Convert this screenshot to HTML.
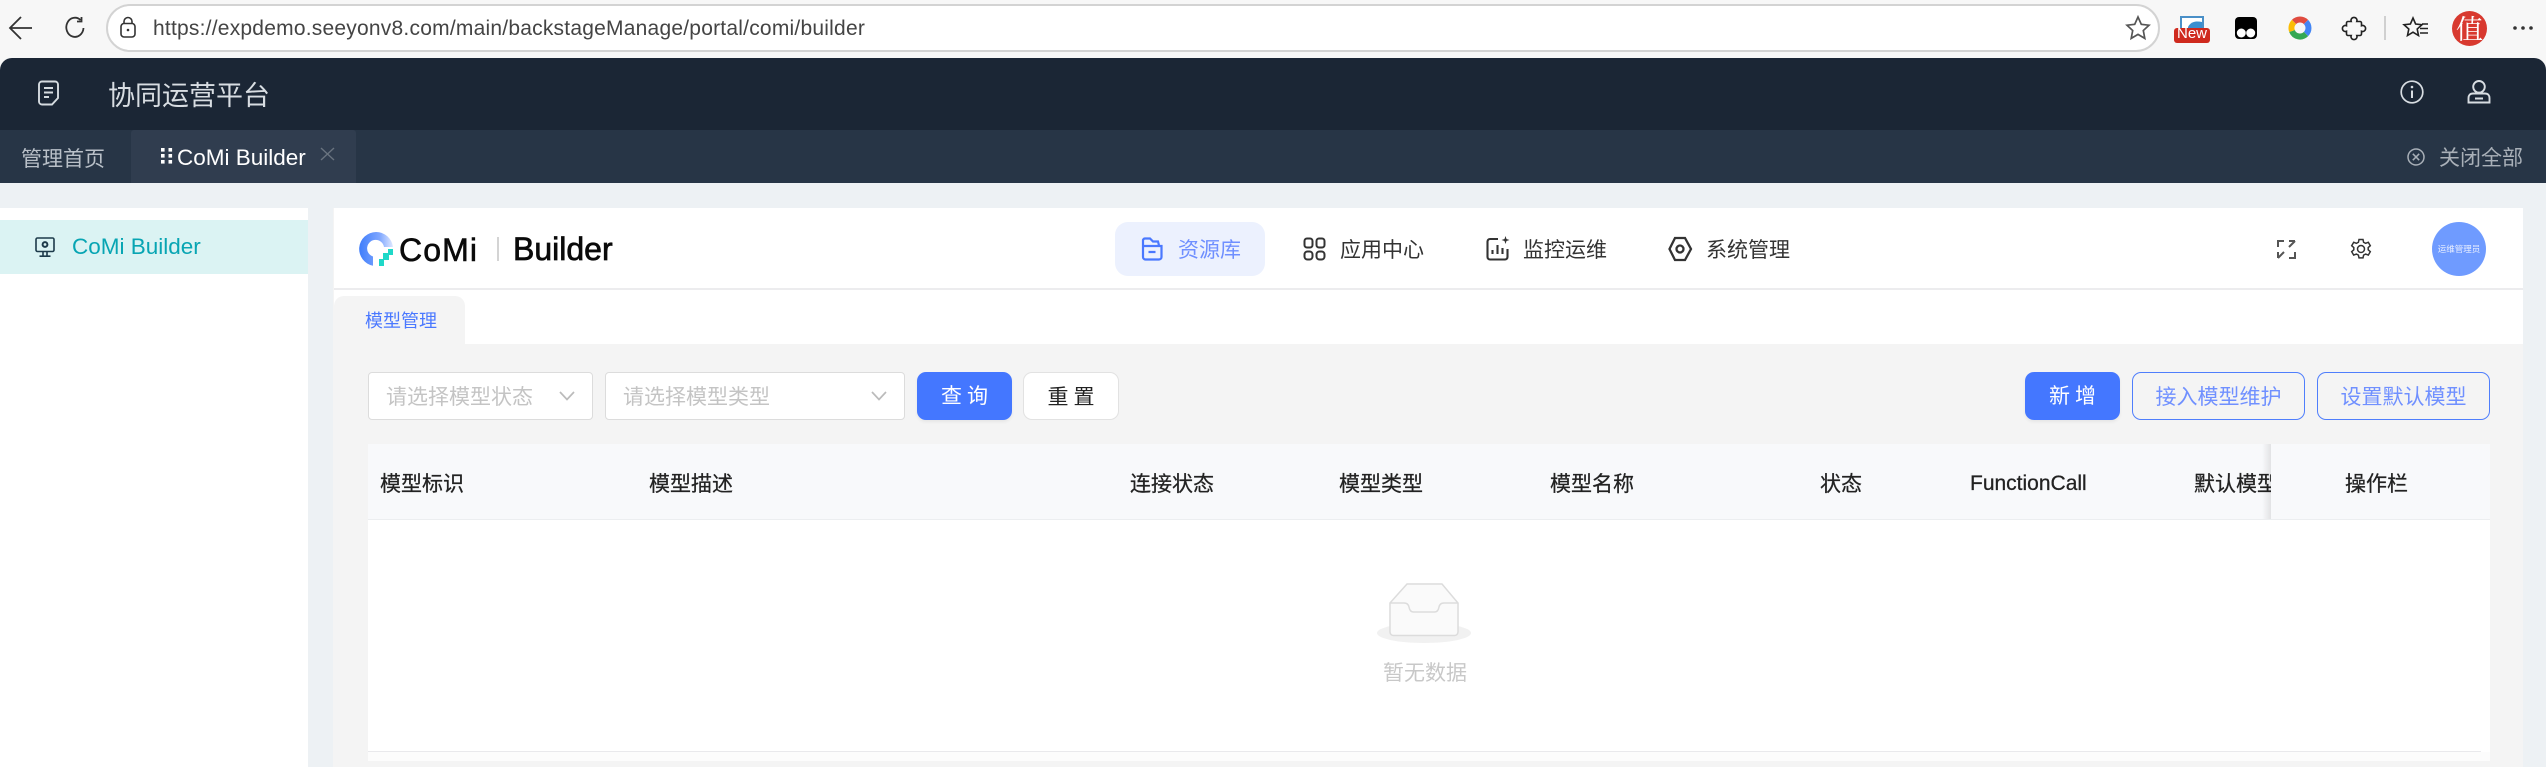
<!DOCTYPE html>
<html lang="zh"><head><meta charset="utf-8"><title>CoMi Builder</title>
<style>
*{box-sizing:border-box}
html,body{margin:0;padding:0}
body{width:2546px;height:767px;position:relative;overflow:hidden;background:#f7f7f7;font-family:"Liberation Sans","Noto Sans CJK SC",sans-serif}
.a{position:absolute}
.t{position:absolute;white-space:nowrap;font-family:"Noto Sans CJK SC","Liberation Sans",sans-serif;font-size:21px}
.l{font-family:"Liberation Sans","Noto Sans CJK SC",sans-serif}
svg{position:absolute;display:block;overflow:visible}
.th{color:#222;line-height:30px;top:468px;-webkit-text-stroke:.25px #222}
.btn{position:absolute;top:372px;height:48px;border-radius:8px;text-align:center;line-height:46px;font-family:"Noto Sans CJK SC",sans-serif;font-size:21px;white-space:nowrap}
.sel{position:absolute;top:372px;height:48px;background:#fff;border:1.5px solid #dcdcdc;border-radius:4px}
</style></head><body>

<!-- browser chrome -->
<svg style="left:8px;top:15px" width="26" height="26" viewBox="0 0 26 26" fill="none" stroke="#333" stroke-width="1.8"><path d="M13 2 2 13l11 11M2 13h22"/></svg>
<svg style="left:63px;top:16px" width="24" height="24" viewBox="0 0 24 24" fill="none" stroke="#333" stroke-width="1.8"><path d="M20.5 12a8.6 9.6 0 1 1-3-8M18.5 1v4.5H14"/></svg>
<div class="a" style="left:106px;top:4px;width:2054px;height:48px;background:#fff;border:2px solid #d3d3d3;border-radius:24px"></div>
<svg style="left:120px;top:17px" width="16" height="21" viewBox="0 0 16 21" fill="none" stroke="#333" stroke-width="1.6"><rect x="1" y="6.500" width="14" height="13.500" rx="3"/><path d="M4 6.500V4.500a4 4 0 0 1 8 0v2"/><circle cx="8" cy="13" r="1.300" fill="#333" stroke="none"/></svg>
<div class="t l" style="left:153px;top:16px;line-height:26px;font-size:21px;color:#444;letter-spacing:.22px">https://expdemo.seeyonv8.com/main/backstageManage/portal/comi/builder</div>
<svg style="left:2125px;top:15px" width="26" height="26" viewBox="0 0 26 26" fill="none" stroke="#555" stroke-width="1.7"><path d="M13 2l3.300 7.300 7.700.9-5.700 5.300 1.500 7.900-6.800-4-6.800 4 1.500-7.900L2 10.200l7.700-.9z"/></svg>
<svg style="left:2174px;top:16px" width="36" height="28" viewBox="0 0 36 28"><rect x="6" y="0" width="24" height="16" fill="#4a90c8"/><rect x="8" y="2" width="20" height="14" fill="#fff"/><path d="M14 11c3-6 9-6 14-5v8H14z" fill="#3b8fd0"/><rect x="0" y="12" width="36" height="15" rx="3" fill="#cf2a1e"/></svg>
<div class="t l" style="left:2174px;top:26px;width:36px;text-align:center;font-size:15px;line-height:16px;color:#fff">New</div>
<svg style="left:2235px;top:17px" width="22" height="22" viewBox="0 0 22 22"><rect width="22" height="22" rx="4" fill="#000"/><circle cx="6.300" cy="16" r="4.500" fill="#fff"/><circle cx="15.700" cy="16" r="4.500" fill="#fff"/></svg>
<svg style="left:2288px;top:16px" width="24" height="24" viewBox="0 0 24 24" fill="none" stroke-width="6"><path d="M6 6A8.500 8.500 0 0 1 18 6" stroke="#e04c3f"/><path d="M18 6A8.500 8.500 0 0 1 18 18" stroke="#4285f4"/><path d="M18 18A8.500 8.500 0 0 1 4 15" stroke="#34a853"/><path d="M4 15A8.500 8.500 0 0 1 6 6" stroke="#fbbc05"/></svg>
<svg style="left:2343px;top:17px" width="22" height="22" viewBox="0 0 22 22" fill="none" stroke="#222" stroke-width="1.600"><path d="M8.200 4.500a3 3 0 1 1 5.600 0h3.200a1.500 1.500 0 0 1 1.500 1.500v2.700a3 3 0 1 1 0 5.600V17a1.500 1.500 0 0 1-1.500 1.500h-3.200a3 3 0 1 1-5.600 0H5A1.500 1.500 0 0 1 3.500 17v-2.700a3 3 0 1 1 0-5.600V6A1.500 1.500 0 0 1 5 4.500z"/></svg>
<div class="a" style="left:2384px;top:16px;width:2px;height:24px;background:#d0d0d0"></div>
<svg style="left:2403px;top:16px" width="26" height="24" viewBox="0 0 26 24" fill="none" stroke="#222" stroke-width="1.600"><path d="M10 2l2.600 6 6.400.7-4.800 4.300 1.300 6.500L10 16.200 4.500 19.500 5.800 13 1 8.700 7.400 8zM19 8h6M17 12.500h8M17 17h8"/></svg>
<div class="a" style="left:2452px;top:11px;width:35px;height:35px;border-radius:50%;background:#d8392f"></div>
<div class="t" style="left:2452px;top:11px;width:35px;height:35px;line-height:33px;text-align:center;color:#fff;font-size:27px;font-family:'Noto Serif CJK SC',serif">值</div>
<svg style="left:2513px;top:25px" width="20" height="6" viewBox="0 0 20 6" fill="#333"><circle cx="2" cy="3" r="1.800"/><circle cx="10" cy="3" r="1.800"/><circle cx="18" cy="3" r="1.800"/></svg>

<!-- page header -->
<div class="a" style="left:0;top:58px;width:2546px;height:72px;background:#1b2635;border-radius:12px 12px 0 0"></div>
<div class="a" style="left:0;top:130px;width:2546px;height:53px;background:#273546"></div>
<div class="a" style="left:131px;top:130px;width:225px;height:53px;background:#303d4f;border-radius:3px 3px 0 0"></div>
<svg style="left:37px;top:80px" width="23" height="26" viewBox="0 0 23 26" fill="none" stroke="#d5dbe0" stroke-width="1.900"><path d="M5 1.500h13a3 3 0 0 1 3 3V18l-6 6.500H5a3 3 0 0 1-3-3v-17a3 3 0 0 1 3-3zM7 8h9M7 12.500h9M7 17h5"/></svg>
<div class="t" style="left:108px;top:75px;font-size:27px;line-height:38px;color:#d8dde2">协同运营平台</div>
<div class="t" style="left:21px;top:143px;line-height:30px;color:#b9c0c8">管理首页</div>
<svg style="left:161px;top:147px" width="12" height="17" viewBox="0 0 12 17" fill="#fff"><rect x="0" y="1" width="3.600" height="3.600"/><rect x="7.500" y="1" width="3.600" height="3.600"/><rect x="0" y="7" width="3.600" height="3.600"/><rect x="7.500" y="7" width="3.600" height="3.600"/><rect x="0" y="13" width="3.600" height="3.600"/><rect x="7.500" y="13" width="3.600" height="3.600"/></svg>
<div class="t l" style="left:177px;top:143px;line-height:30px;font-size:22.500px;color:#fff">CoMi Builder</div>
<svg style="left:320px;top:148px" width="15" height="12" viewBox="0 0 15 12" fill="none" stroke="#69737f" stroke-width="1.400"><path d="M1 0l13 12M14 0 1 12"/></svg>
<svg style="left:2400px;top:80px" width="24" height="24" viewBox="0 0 24 24" fill="none" stroke="#d8dde2" stroke-width="1.700"><circle cx="12" cy="12" r="10.800"/><path d="M12 10.500V18" stroke-width="2"/><circle cx="12" cy="7" r="1.300" fill="#d8dde2" stroke="none"/></svg>
<svg style="left:2467px;top:80px" width="24" height="24" viewBox="0 0 24 24" fill="none" stroke="#d8dde2" stroke-width="1.900"><circle cx="12" cy="6.800" r="5.800"/><path d="M6 13.500h12c3 0 4.500 2 4.500 4.500v4.500h-21V18c0-2.500 1.500-4.500 4.500-4.500zM8 18.500h8"/></svg>
<svg style="left:2407px;top:148px" width="18" height="18" viewBox="0 0 18 18" fill="none" stroke="#a9b0b8" stroke-width="1.500"><circle cx="9" cy="9" r="8"/><path d="M5.800 5.800l6.400 6.400M12.200 5.800l-6.400 6.400"/></svg>
<div class="t" style="left:2439px;top:142px;line-height:30px;color:#a9b0b8">关闭全部</div>

<!-- main bg -->
<div class="a" style="left:0;top:183px;width:2546px;height:584px;background:#edf1f4"></div>
<div class="a" style="left:0;top:208px;width:308px;height:559px;background:#fff"></div>
<div class="a" style="left:0;top:220px;width:308px;height:54px;background:#dbf3f3"></div>
<svg style="left:35px;top:237px" width="20" height="20" viewBox="0 0 20 20" fill="none" stroke="#1d3a4a" stroke-width="1.600"><rect x="1" y="1" width="18" height="13.500" rx="1.500"/><path d="M8 14.500v4M12 14.500v4M4.500 19.200h11"/><circle cx="10" cy="7.500" r="2.400" stroke-width="2"/></svg>
<div class="t l" style="left:72px;top:232px;line-height:30px;font-size:22.500px;color:#08a5b3">CoMi Builder</div>

<!-- content -->
<div class="a" style="left:333px;top:208px;width:2190px;height:559px;background:#f4f4f4"></div>
<div class="a" style="left:334px;top:208px;width:2189px;height:136px;background:#fff"></div>
<div class="a" style="left:334px;top:288px;width:2189px;height:2px;background:#ececee"></div>
<div class="a" style="left:334px;top:296px;width:131px;height:48px;background:#f4f4f4;border-radius:10px 10px 0 0"></div>
<div class="t" style="left:365px;top:306px;font-size:18px;line-height:28px;color:#4a78ff">模型管理</div>

<!-- logo -->
<svg style="left:359px;top:232px" width="35" height="34" viewBox="0 0 35 34">
<defs><linearGradient id="g" x1="0" y1="0" x2="1" y2="0"><stop offset="0" stop-color="#3f7dfb"/><stop offset=".6" stop-color="#7ea6ff"/><stop offset="1" stop-color="#dfe8ff"/></linearGradient></defs>
<path d="M17 0a17 17 0 0 1 17 15H25a8.500 8.500 0 1 0-11 9.500V33.700A17 17 0 0 1 17 0z" fill="url(#g)"/>
<path d="M20 34v-7h4v-6h5v-4h5v6h-4v5h-5v6z" fill="#1fd8c8"/></svg>
<div class="t l" style="left:399px;top:233px;font-size:32px;line-height:34px;font-weight:400;color:#0a0a0a;letter-spacing:1.100px;-webkit-text-stroke:.6px #0a0a0a">CoMi</div>
<div class="a" style="left:497px;top:237px;width:2px;height:24px;background:#d4d4d4"></div>
<div class="t l" style="left:513px;top:231px;font-size:32px;line-height:36px;color:#0a0a0a;-webkit-text-stroke:.7px #0a0a0a">Builder</div>

<!-- nav -->
<div class="a" style="left:1115px;top:222px;width:150px;height:54px;background:#ecf1fe;border-radius:13px"></div>
<svg style="left:1141px;top:237px" width="22" height="24" viewBox="0 0 22 24" fill="none" stroke="#4a78ff" stroke-width="2.200"><path d="M2 9V3.500a2 2 0 0 1 2-2h5l3 3h5l1 4M2 9h18.500V20a2.500 2.500 0 0 1-2.500 2.500H4.500A2.500 2.500 0 0 1 2 20zM7.500 15h7"/></svg>
<div class="t" style="left:1178px;top:234px;line-height:30px;color:#6f8fff">资源库</div>
<svg style="left:1303px;top:237px" width="23" height="24" viewBox="0 0 23 24" fill="none" stroke="#333" stroke-width="2"><rect x="1.500" y="1.500" width="8" height="9" rx="2.500"/><rect x="13.500" y="1.500" width="8" height="9" rx="2.500"/><rect x="1.500" y="14.500" width="8" height="8" rx="3"/><rect x="13.500" y="14.500" width="8" height="8" rx="3"/></svg>
<div class="t" style="left:1340px;top:234px;line-height:30px;color:#333">应用中心</div>
<svg style="left:1486px;top:236px" width="24" height="25" viewBox="0 0 24 25" fill="none" stroke="#333" stroke-width="2.100"><path d="M12 3H4a2.500 2.500 0 0 0-2.500 2.500v15.500A2.500 2.500 0 0 0 4 23.500h15a2.500 2.500 0 0 0 2.500-2.500V13M6.500 18v-4M11.500 18V9M16.500 18v-6"/><path d="M19.500 0l1 3 3 1-3 1-1 3-1-3-3-1 3-1z" fill="#333" stroke="none"/></svg>
<div class="t" style="left:1523px;top:234px;line-height:30px;color:#333">监控运维</div>
<svg style="left:1668px;top:236px" width="24" height="26" viewBox="0 0 24 26" fill="none" stroke="#333" stroke-width="2.300"><path d="M7 2h10l6 11-6 11H7L1.500 13z"/><circle cx="12" cy="13" r="3.500"/></svg>
<div class="t" style="left:1706px;top:234px;line-height:30px;color:#333">系统管理</div>

<!-- right header icons -->
<svg style="left:2277px;top:240px" width="19" height="19" viewBox="0 0 19 19" fill="none" stroke="#555" stroke-width="2"><path d="M7 1H1v6M12 18h6v-6M12 1h6M18 1l-6 6M1 12v6M1 18l6-6"/></svg>
<svg style="left:2350px;top:238px" width="22" height="22" viewBox="0 0 22 22" fill="none" stroke="#333" stroke-width="1.500"><path d="M9 1.500h4l.6 2.800 2 1 2.700-1 2 3.400-2.100 1.900v2.200l2.100 1.900-2 3.400-2.700-1-2 1-.6 2.800H9l-.6-2.800-2-1-2.700 1-2-3.400 2.100-1.900V9.600L1.700 7.700l2-3.400 2.700 1 2-1z"/><circle cx="11" cy="11" r="3.500"/></svg>
<div class="a" style="left:2432px;top:222px;width:54px;height:54px;border-radius:50%;background:#6f9bff"></div>
<div class="t" style="left:2432px;top:242px;width:54px;text-align:center;font-size:8.500px;line-height:14px;color:#e8eeff">运维管理员</div>

<!-- filters -->
<div class="sel" style="left:368px;width:225px"></div>
<div class="t" style="left:386px;top:381px;line-height:30px;color:#c4c4c4">请选择模型状态</div>
<svg style="left:559px;top:391px" width="16" height="10" viewBox="0 0 16 10" fill="none" stroke="#bbb" stroke-width="1.700"><path d="M1 1l7 7.500L15 1"/></svg>
<div class="sel" style="left:605px;width:300px"></div>
<div class="t" style="left:623px;top:381px;line-height:30px;color:#c4c4c4">请选择模型类型</div>
<svg style="left:871px;top:391px" width="16" height="10" viewBox="0 0 16 10" fill="none" stroke="#bbb" stroke-width="1.700"><path d="M1 1l7 7.500L15 1"/></svg>
<div class="btn" style="left:917px;width:95px;background:#4477ff;color:#fff;border-radius:9px;box-shadow:0 2px 3px rgba(0,0,0,.06);letter-spacing:5px;text-indent:5px">查询</div>
<div class="btn" style="left:1023px;width:96px;background:#fff;color:#222;border:1.500px solid #e2e2e2;border-radius:9px;letter-spacing:5px;text-indent:5px">重置</div>
<div class="btn" style="left:2025px;width:95px;background:#4477ff;color:#fff;border-radius:9px;box-shadow:0 2px 3px rgba(0,0,0,.06);letter-spacing:5px;text-indent:5px">新增</div>
<div class="btn" style="left:2132px;width:173px;border:1.500px solid #4f7efc;color:#7090ff;border-radius:9px">接入模型维护</div>
<div class="btn" style="left:2317px;width:173px;border:1.500px solid #4f7efc;color:#7090ff;border-radius:9px">设置默认模型</div>

<!-- table -->
<div class="a" style="left:368px;top:444px;width:2122px;height:317px;background:#fff"></div>
<div class="a" style="left:368px;top:444px;width:2122px;height:75px;background:#f8f9fb"></div>
<div class="a" style="left:368px;top:519px;width:2122px;height:1px;background:#eceef0"></div>
<div class="a" style="left:368px;top:751px;width:2113px;height:1px;background:#e9e9ec"></div>
<div class="a" style="left:368px;top:752px;width:2122px;height:9px;background:#fcfcfc"></div>
<div class="t th" style="left:380px">模型标识</div>
<div class="t th" style="left:649px">模型描述</div>
<div class="t th" style="left:1130px">连接状态</div>
<div class="t th" style="left:1339px">模型类型</div>
<div class="t th" style="left:1550px">模型名称</div>
<div class="t th" style="left:1820px">状态</div>
<div class="t th l" style="left:1970px;top:469px;font-size:21px">FunctionCall</div>
<div class="a" style="left:2194px;top:468px;width:77px;height:30px;overflow:hidden"><div class="t th" style="left:0;top:0">默认模型</div></div>
<div class="a" style="left:2262px;top:444px;width:9px;height:75px;background:linear-gradient(90deg,rgba(0,0,0,0),rgba(0,0,0,.09))"></div>
<div class="t th" style="left:2345px">操作栏</div>

<!-- empty -->
<svg style="left:1376px;top:582px" width="96" height="62" viewBox="0 0 96 62" fill="none">
<ellipse cx="48" cy="51" rx="47" ry="10" fill="#f1f1f1"/>
<path d="M14 21 31 2h35l16 19v29a3.500 3.500 0 0 1-3.500 3.500h-61A3.500 3.500 0 0 1 14 50z" fill="#fafafa" stroke="#dcdcdc" stroke-width="1.500"/>
<path d="M14 21h14c3 0 4.500 1.500 5 4 .5 3 1.500 5 4.500 5h21c3 0 4-2 4.500-5 .5-2.500 2-4 5-4h14" stroke="#dcdcdc" stroke-width="1.500"/></svg>
<div class="t" style="left:1383px;top:657px;line-height:30px;color:#c8c8c8">暂无数据</div>

</body></html>
